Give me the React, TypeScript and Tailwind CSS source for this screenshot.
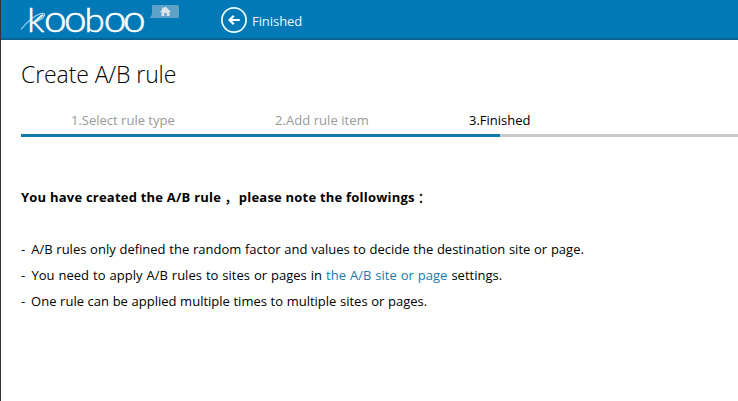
import React from "react";

function Logo() {
  return (
    <svg width="128" height="38" viewBox="20 0 128 38" className="block shrink-0 overflow-visible" aria-label="kooboo">
      <path d="M21 29.500C27 22 34 15.500 41 13.500C47 12.500 45 17 39 20.500C36 22.500 33 23 31 23" fill="none" stroke="#a9dcf2" strokeWidth="1.200" />
      <text transform="translate(0 31.500) scale(1.080 1)" fill="#fff" stroke="#fff" strokeWidth="0.600" fontSize="37.500" fontWeight="300" fontFamily="Lato, sans-serif">
        <tspan x="25.200" fontSize="33">k</tspan>
        <tspan x="40.800 59.200">oo</tspan>
        <tspan x="78.200" fontSize="34">b</tspan>
        <tspan x="96 114">oo</tspan>
      </text>
    </svg>
  );
}

function HomeTag() {
  return (
    <svg width="31" height="14" viewBox="149 5 31 14" className="block shrink-0">
      <path d="M153 5H177.500Q179 5 179 6.500V16.500Q179 18 177.500 18H149.500Q152 16 152 13V6Q152 5 153 5Z" fill="#5da3c9" />
      <path d="M165.500 6.500L171 12H169.500V16H166.700V13H164.300V16H161.500V12H160L162 10V7.500H163.500V8.500Z" fill="#dce4e8" />
    </svg>
  );
}

function BackIcon() {
  return (
    <svg width="28" height="28" viewBox="0 0 28 28" fill="none" className="block shrink-0">
      <circle cx="14" cy="14" r="12.100" stroke="#e8ffff" strokeWidth="1.700" />
      <path d="M19.800 14H10M13.800 9.700L9.500 14L13.800 18.300" stroke="#fff" strokeWidth="2.200" />
    </svg>
  );
}

export default function App() {
  return (
    <div className="h-[401px] w-[738px] overflow-hidden border-l border-[#333] bg-white font-['Open_Sans','Noto_Sans_CJK_SC',sans-serif] text-[13px] text-black">
      <header className="flex h-10 items-start border-b-2 border-[#086391] bg-[#0079b6] pl-[19px]">
        <Logo />
        <div className="ml-px mt-[5px]"><HomeTag /></div>
        <a className="ml-10 mt-[6px] flex items-start gap-1 text-[#e8faff]">
          <BackIcon />
          <span className="pt-px leading-7 tracking-[-0.06px]">Finished</span>
        </a>
      </header>
      <main className="pl-5">
        <h1 className="h-[66px] pt-[18px] text-[23px] font-light leading-8 tracking-[-0.1px]">Create A/B rule</h1>
        <ol className="relative flex h-[31px] border-b-[3px] border-[#c8c8c8] leading-7 text-[#999]">
          <li className="w-[203px] pl-[50px]">1.Select rule type</li>
          <li className="w-[194px] pl-[51px] tracking-[0.06px]">2.Add rule item</li>
          <li className="pl-[51px] text-black">3.Finished</li>
          <span className="absolute left-0 top-[28px] h-[3px] w-[479px] bg-[#1279ab]" />
        </ol>
        <section className="whitespace-nowrap pt-[47px] leading-[26px]">
          <p className="font-bold tracking-[0.22px]">You have created the A/B rule<span className="ml-[3px] tracking-[-2px]">，</span> please note the followings<span className="ml-[3px] font-medium">：</span></p>
          <div className="mt-[26px]">
            <p className="[word-spacing:0.35px]"><span className="mr-[2.3px]">-</span> A/B rules only defined the random factor and values to decide the destination site or page.</p>
            <p className="[word-spacing:0.62px]"><span className="mr-[2.3px]">-</span> You need to apply A/B rules to sites or pages in <a className="text-[#1a7aac]">the A/B site or page</a> settings.</p>
            <p className="[word-spacing:0.25px]"><span className="mr-[2.3px]">-</span> One rule can be applied multiple times to multiple sites or pages.</p>
          </div>
        </section>
      </main>
    </div>
  );
}
